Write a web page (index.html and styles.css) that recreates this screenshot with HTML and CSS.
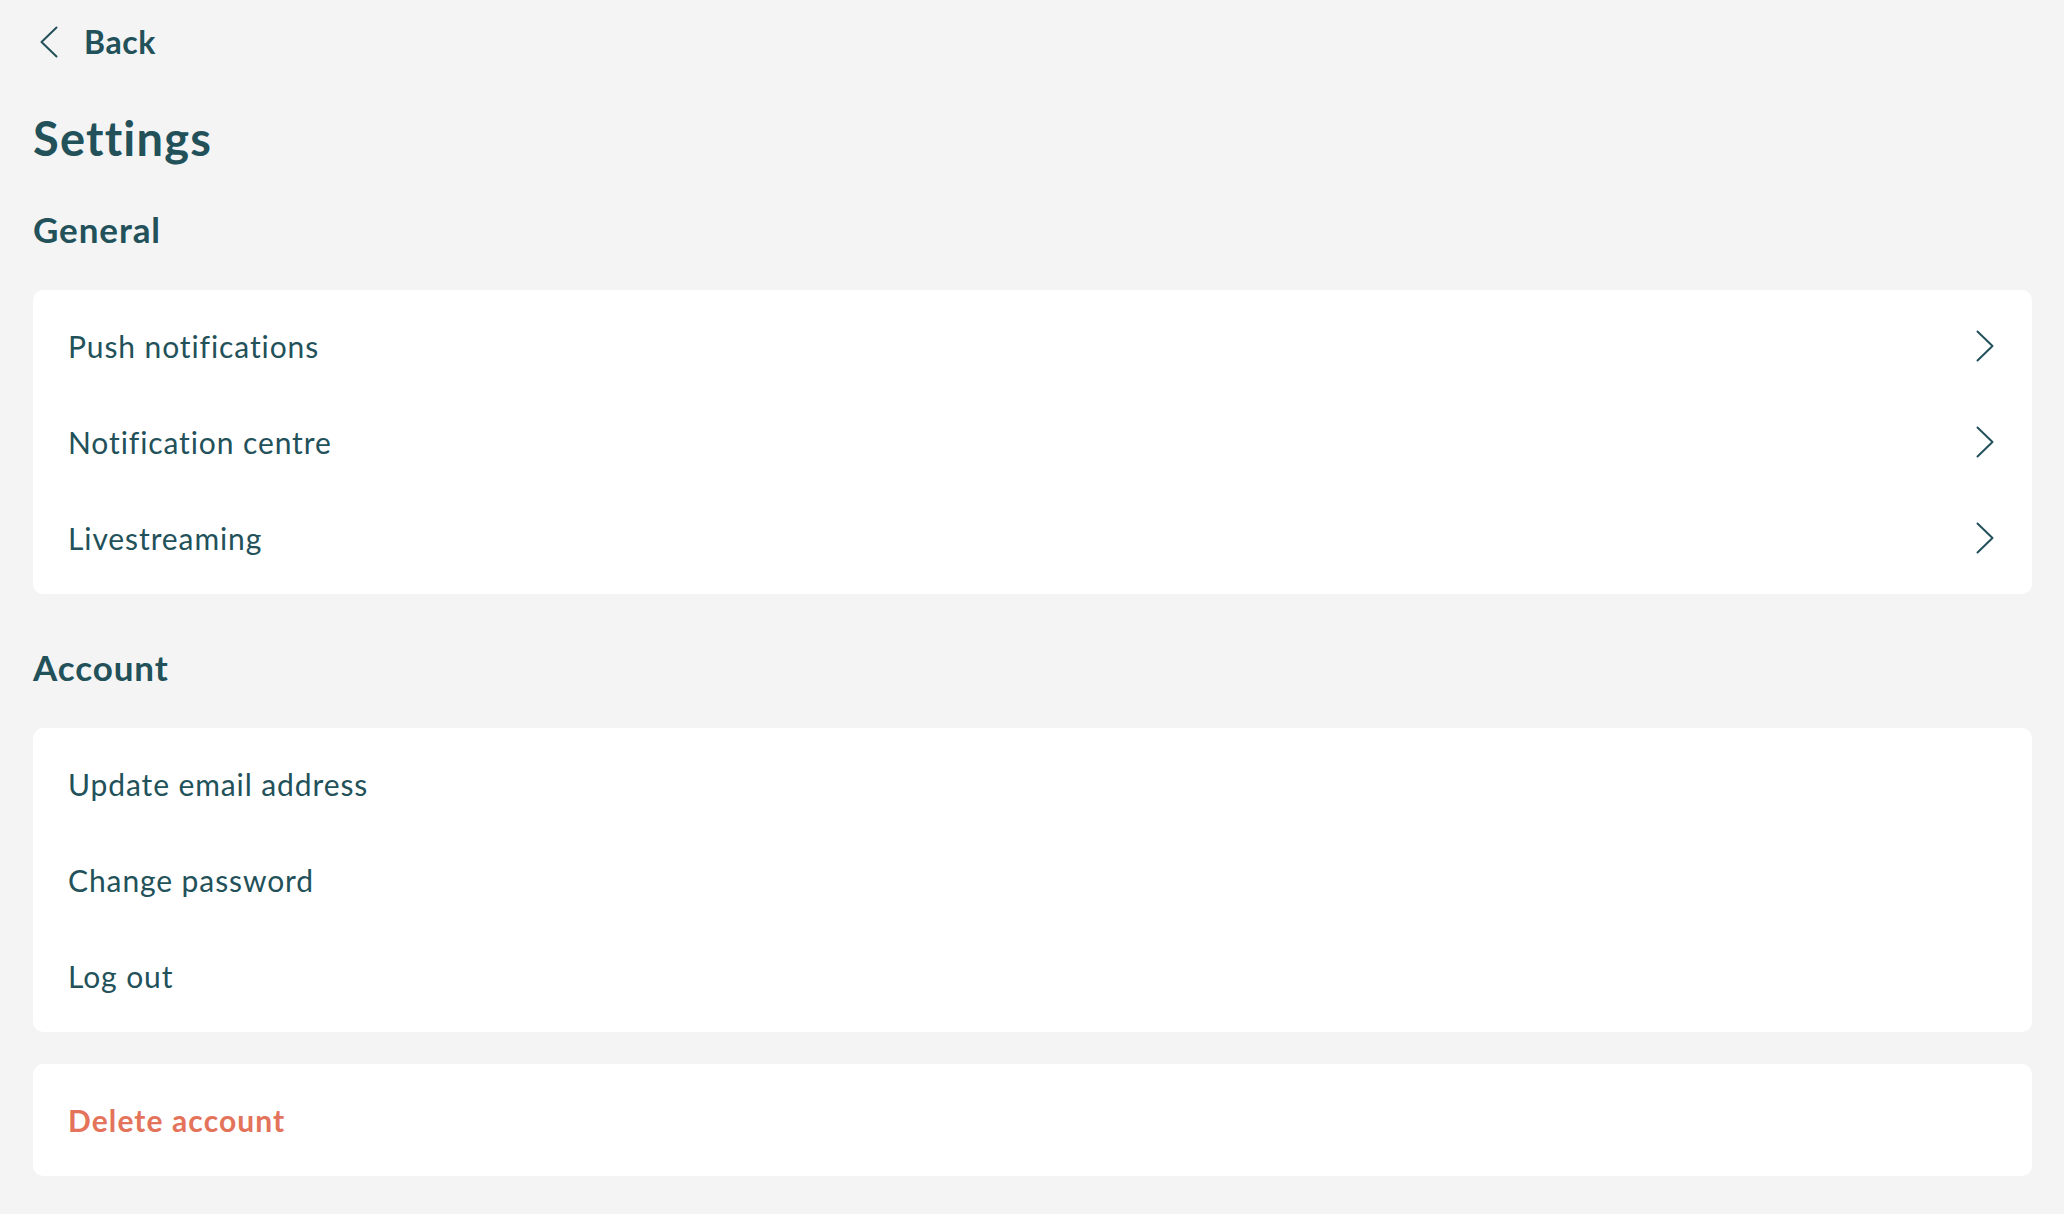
FILE: index.html
```html
<!DOCTYPE html>
<html lang="en">
<head>
<meta charset="utf-8">
<title>Settings</title>
<link rel="stylesheet" href="styles.css">
</head>
<body>
<div class="page">
  <a class="back" href="#">
    <svg class="back-icon" viewBox="0 0 18 32" width="18" height="32" aria-hidden="true"><path d="M16.5 1.5 L1.5 16 L16.5 30.5"/></svg>
    <span class="back-label">Back</span>
  </a>
  <h1 class="page-title">Settings</h1>

  <h2 class="section-title">General</h2>
  <div class="card">
    <div class="row"><span class="row-label">Push notifications</span><svg class="chev" viewBox="0 0 18 32" width="18" height="32" aria-hidden="true"><path d="M1.5 1.5 L16.5 16 L1.5 30.5"/></svg></div>
    <div class="row"><span class="row-label">Notification centre</span><svg class="chev" viewBox="0 0 18 32" width="18" height="32" aria-hidden="true"><path d="M1.5 1.5 L16.5 16 L1.5 30.5"/></svg></div>
    <div class="row"><span class="row-label">Livestreaming</span><svg class="chev" viewBox="0 0 18 32" width="18" height="32" aria-hidden="true"><path d="M1.5 1.5 L16.5 16 L1.5 30.5"/></svg></div>
  </div>

  <h2 class="section-title section-gap">Account</h2>
  <div class="card">
    <div class="row"><span class="row-label">Update email address</span></div>
    <div class="row"><span class="row-label">Change password</span></div>
    <div class="row"><span class="row-label">Log out</span></div>
  </div>

  <div class="card card-danger">
    <div class="row"><span class="row-label danger">Delete account</span></div>
  </div>
</div>
</body>
</html>
```
FILE: styles.css
```css
html, body {
  margin: 0;
  padding: 0;
  background: #f4f4f4;
}
body {
  font-family: "Lato", "Noto Sans", sans-serif;
  color: #22515a;
  font-variant-ligatures: none;
}
.page {
  padding: 10px 32px 0 33px;
}
.back {
  display: flex;
  align-items: center;
  height: 64px;
  padding-left: 7px;
  color: #22515a;
  text-decoration: none;
}
.back-icon {
  flex: none;
  fill: none;
  stroke: #22515a;
  stroke-width: 2;
  stroke-linecap: round;
  stroke-linejoin: round;
}
.back-label {
  margin-left: 26px;
  font-size: 32px;
  font-weight: 700;
  line-height: 64px;
  letter-spacing: 0.6px;
}
.page-title {
  margin: 34px 0 0;
  font-size: 47px;
  font-weight: 700;
  line-height: 60px;
  letter-spacing: 1.2px;
}
.section-title {
  margin: 36px 0 36px;
  font-size: 35px;
  font-weight: 700;
  line-height: 50px;
  letter-spacing: 0.9px;
}
.section-gap {
  margin-top: 48px;
}
.card {
  background: #ffffff;
  border-radius: 10px;
  padding: 8px 0;
}
.card-danger {
  margin-top: 32px;
}
.row {
  display: flex;
  align-items: center;
  justify-content: space-between;
  height: 96px;
  padding: 0 38px 0 35px;
}
.row-label {
  font-size: 30px;
  line-height: 96px;
  letter-spacing: 0.9px;
}
.danger {
  color: #e3735a;
  font-weight: 700;
  letter-spacing: 1.1px;
}
.chev {
  flex: none;
  fill: none;
  stroke: #22515a;
  stroke-width: 2;
  stroke-linecap: round;
  stroke-linejoin: round;
}
```
